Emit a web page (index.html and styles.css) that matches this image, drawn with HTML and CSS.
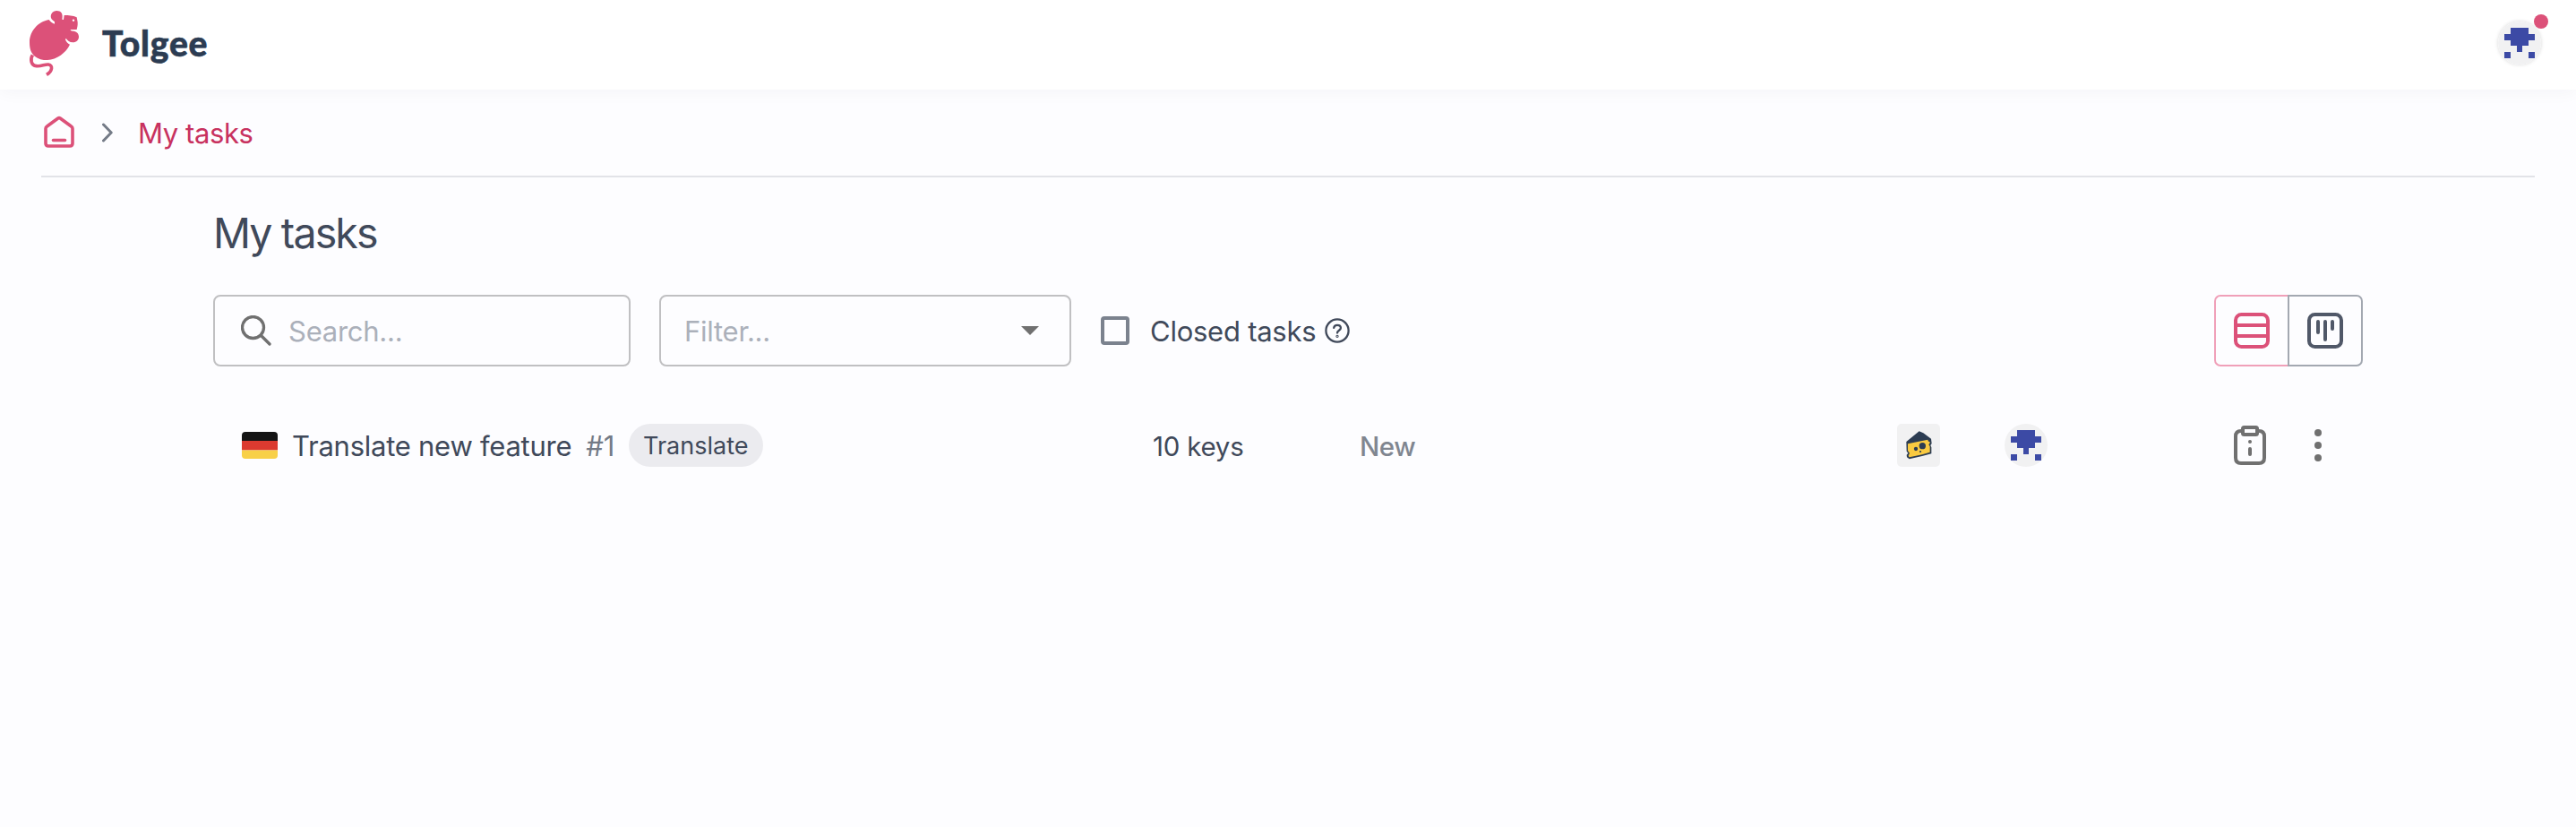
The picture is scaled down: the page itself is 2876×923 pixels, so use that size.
FILE: index.html
```
<!DOCTYPE html>
<html lang="en">
<head>
<meta charset="utf-8">
<title>Tolgee</title>
<link rel="stylesheet" href="styles.css">
</head>
<body>
<header class="topbar">
  <a class="brand">
    <svg class="brand-logo" viewBox="0 0 192 240" fill="#dc5179">
      <path d="M80 42 C44 48 15 80 15 118 C15 140 20 154 32 164 C44 174 58 177 75 177 C105 176 138 152 150 125 C143 122 138 117 135 109 L137 104 C142 111 149 118 160 118 C172 118 180 110 180 99 C180 87 171 80 160 80 L152 78 L153 75 L173 75 C174 69 177 60 176 50 L173 34 C160 28 146 27 131 27 L129 42 L124 41 C128 20 120 12 106 12 C92 12 84 24 87 36 C89 42 96 46 99 49 L99 56 C91 55 86 49 80 42 Z"/>
      <path d="M25 160 C17 174 19 195 38 197 C54 199 65 191 78 192 C94 194 92 214 72 226" fill="none" stroke="#dc5179" stroke-width="11"/>
      <circle cx="162" cy="44" r="3.6" fill="#fff"/>
    </svg>
    <span class="brand-name">Tolgee</span>
  </a>
  <div class="user-menu">
    <svg class="identicon identicon-ring" viewBox="0 0 48 48"><circle cx="24" cy="24" r="24" fill="#f1f1f2"/><path fill="#3c4aa5" d="M14 7H34V14H41V21H34V27H27V34H21V27H14V21H7V14H14ZM7 34H14V41H7ZM34 34H41V41H34Z" shape-rendering="crispEdges"/></svg>
    <span class="badge"></span>
  </div>
</header>

<nav class="breadcrumbs">
  <svg class="icon-home" viewBox="0 0 48 48" fill="none" stroke="#dc5179" stroke-width="3.6" stroke-linecap="round" stroke-linejoin="round"><path d="M9 19.5Q9 18 10.5 17L22.8 8Q24 7.2 25.2 8L37.500 17Q39 18 39 19.500V36Q39 39 36 39H12Q9 39 9 36Z"/><path d="M17.500 32.500H30.500"/></svg>
  <svg class="icon-chevron" viewBox="0 0 12 22" fill="none" stroke="#747b87" stroke-width="3" stroke-linecap="round" stroke-linejoin="round"><path d="M1.500 2L10.200 11L1.500 20"/></svg>
  <a class="crumb">My tasks</a>
</nav>

<main class="content">
  <h1 class="page-title">My tasks</h1>
  <div class="toolbar">
    <div class="field search">
      <svg class="icon-search" viewBox="0 0 34 34" fill="none" stroke="#707070" stroke-width="3.300" stroke-linecap="round"><circle cx="13.500" cy="13.500" r="12"/><path d="M22.500 22.500L32 32"/></svg>
      <span class="label">Search...</span>
    </div>
    <div class="field filter">
      <span class="label">Filter...</span>
      <svg class="icon-arrow" viewBox="0 0 20 10"><path d="M0 0H20L10 10Z" fill="#707070"/></svg>
    </div>
    <label class="closed-toggle">
      <span class="checkbox"></span>
      <span class="label">Closed tasks</span>
      <svg class="icon-help" viewBox="0 0 28 28" fill="none" stroke="#40495a" stroke-width="2.300" stroke-linecap="round"><circle cx="14" cy="14" r="12.600"/><path d="M10.200 10.900C10.500 8.900 12 7.800 14 7.800C16.300 7.800 17.900 9.200 17.900 11.100C17.900 13.900 14.100 13.700 14 16.500"/><circle cx="14" cy="20.300" r=".5"/></svg>
    </label>
    <div class="view-switch">
      <div class="view-button view-active">
        <svg viewBox="0 0 40 40" fill="none" stroke="#dc5179" stroke-width="4"><rect x="2" y="2" width="36" height="36" rx="6.500"/><path d="M2 14H38M2 26H38"/></svg>
      </div>
      <div class="view-button">
        <svg viewBox="0 0 40 40" fill="none" stroke="#505868" stroke-width="4" stroke-linecap="round"><rect x="2" y="2" width="36" height="36" rx="6.500"/><path d="M12 10V22M20 10V30M28 10V18"/></svg>
      </div>
    </div>
  </div>

  <div class="task-row">
    <div class="task-name">
      <svg class="flag" viewBox="0 0 40 30"><clipPath id="flag-clip"><rect width="40" height="30" rx="4"/></clipPath><g clip-path="url(#flag-clip)"><path fill="#141414" d="M0 0H40V10H0Z"/><path fill="#db3a30" d="M0 10H40V20.500H0Z"/><path fill="#f8d048" d="M0 20.500H40V30H0Z"/></g></svg>
      <span class="task-title">Translate new feature</span>
      <span class="task-number">#1</span>
      <span class="chip">Translate</span>
    </div>
    <span class="task-keys">10 keys</span>
    <span class="task-state">New</span>
    <div class="task-people">
      <svg class="project-avatar" viewBox="0 0 144 144"><rect width="144" height="144" rx="15" fill="#f1f1f2"/><path fill="#2c3c52" d="M31 60L74 25L88 31L114 50L116 66L112 72L115 79V100L84 108L41 118L33 112L32 104L37 98L32 92Z"/><path fill="#f9ca41" d="M36 67L103 53L104 58L111 62L106 70L110 76V95L84 103L41 112L38 107L42 98L36 90Z"/><circle cx="85" cy="74" r="11" fill="#2c3c52"/><circle cx="63" cy="84" r="6.500" fill="#2c3c52"/><circle cx="78" cy="93" r="3.300" fill="#2c3c52"/></svg>
      <svg class="identicon" viewBox="0 0 48 48"><circle cx="24" cy="24" r="24" fill="#f1f1f2"/><path fill="#3c4aa5" d="M14 7H34V14H41V21H34V27H27V34H21V27H14V21H7V14H14ZM7 34H14V41H7ZM34 34H41V41H34Z" shape-rendering="crispEdges"/></svg>
    </div>
    <div class="task-actions">
      <svg class="icon-clipboard" viewBox="0 0 36 44" fill="none" stroke="#707070" stroke-width="4" stroke-linecap="round"><path d="M10 6H8Q2 6 2 12V36Q2 42 8 42H28Q34 42 34 36V12Q34 6 28 6H26"/><rect x="10" y="2" width="16" height="8" rx="1.500"/><path d="M18 26V32"/><circle cx="18" cy="18" r="2" fill="#707070" stroke="none"/></svg>
      <svg class="icon-dots" viewBox="0 0 8 36" fill="#707070"><circle cx="4" cy="4" r="4"/><circle cx="4" cy="18" r="4"/><circle cx="4" cy="32" r="4"/></svg>
    </div>
  </div>
</main>
</body>
</html>
```
FILE: styles.css
```
* { box-sizing: border-box; }
body {
  margin: 0;
  min-height: 923px;
  background: #fdfdff;
  color: #40495a;
  font: 31px/40px Inter, "Liberation Sans", sans-serif;
  letter-spacing: -0.25px;
  white-space: nowrap;
}
svg { display: block; flex: none; }

.topbar {
  display: flex;
  justify-content: space-between;
  align-items: flex-start;
  height: 100px;
  padding: 8px 39px 0 28px;
  background: #fff;
  box-shadow: 0 0 20px rgba(20, 20, 60, 0.05);
}
.brand { display: flex; align-items: center; gap: 22px; height: 80px; }
.brand-logo { width: 64px; height: 80px; }
.brand-name {
  color: #2c3c52;
  font: 900 39px/48px Lato, sans-serif;
  letter-spacing: 0.8px;
  -webkit-text-stroke: 0.6px #2c3c52;
}
.user-menu { position: relative; margin-top: 16px; }
.identicon { width: 48px; height: 48px; }
.identicon-ring { border-radius: 50%; box-shadow: 0 0 4px rgba(0, 0, 0, 0.16); }
.badge {
  position: absolute;
  top: -8px;
  right: -8px;
  width: 16px;
  height: 16px;
  border-radius: 50%;
  background: #dc5179;
}

.breadcrumbs {
  display: flex;
  align-items: center;
  height: 98px;
  margin: 0 46px;
  border-bottom: 2px solid #e2e3e8;
}
.icon-home { width: 48px; height: 48px; margin-left: -4px; }
.icon-chevron { width: 12px; height: 22px; margin-left: 24px; }
.crumb { margin-left: 28px; padding-top: 2px; color: #c8325f; letter-spacing: -0.4px; }

.content { padding: 31px 238px 0; }
.page-title {
  margin: 0 0 38px;
  font-size: 46.5px;
  font-weight: 400;
  line-height: 62px;
  letter-spacing: -1.87px;
}
.toolbar { display: flex; height: 80px; }
.label { padding-top: 2px; }
.field {
  display: flex;
  align-items: center;
  border: 2px solid #c0c0c2;
  border-radius: 8px;
  color: #abb0ba;
}
.search { width: 466px; margin-right: 32px; padding-left: 29px; gap: 19px; }
.icon-search { width: 34px; height: 34px; }
.filter { width: 460px; justify-content: space-between; padding: 0 34px 0 26px; }
.icon-arrow { width: 20px; height: 10px; }
.closed-toggle { display: flex; align-items: center; margin-left: 33px; }
.checkbox {
  width: 32px;
  height: 32px;
  margin-right: 23px;
  border: 4px solid #7b828e;
  border-radius: 4px;
}
.icon-help { width: 28px; height: 28px; margin-left: 10px; }
.view-switch { display: flex; margin-left: auto; }
.view-button {
  display: flex;
  align-items: center;
  justify-content: center;
  width: 84px;
  border: 2px solid #a3a8b1;
  border-radius: 0 7px 7px 0;
}
.view-active {
  width: 82px;
  border-color: #f0a0b9;
  border-right: 0;
  border-radius: 7px 0 0 7px;
}
.view-button svg { width: 40px; height: 40px; }

.task-row {
  display: grid;
  grid-template-columns: 1017px 231px 600px 376px 1fr;
  align-items: center;
  height: 80px;
  margin-top: 48px;
  padding-left: 32px;
}
.task-name { display: flex; align-items: center; }
.flag { width: 40px; height: 30px; }
.task-title { margin-left: 16px; padding-top: 2px; }
.task-number { margin-left: 16px; padding-top: 2px; color: #747b87; }
.chip {
  height: 48px;
  margin-left: 16px;
  padding: 0 17px 0 16px;
  border-radius: 24px;
  background: #ebebef;
  font-size: 27px;
  line-height: 49px;
  letter-spacing: 0;
}
.task-keys { padding-top: 2px; font-size: 29.5px; }
.task-state {
  padding-top: 2px;
  color: #808690;
  font-size: 29.5px;
  font-weight: 500;
  letter-spacing: -0.5px;
}
.task-people { display: flex; gap: 72px; }
.project-avatar { width: 48px; height: 48px; }
.task-actions { display: flex; align-items: center; gap: 54px; }
.icon-clipboard { width: 36px; height: 44px; }
.icon-dots { width: 8px; height: 36px; }
```
